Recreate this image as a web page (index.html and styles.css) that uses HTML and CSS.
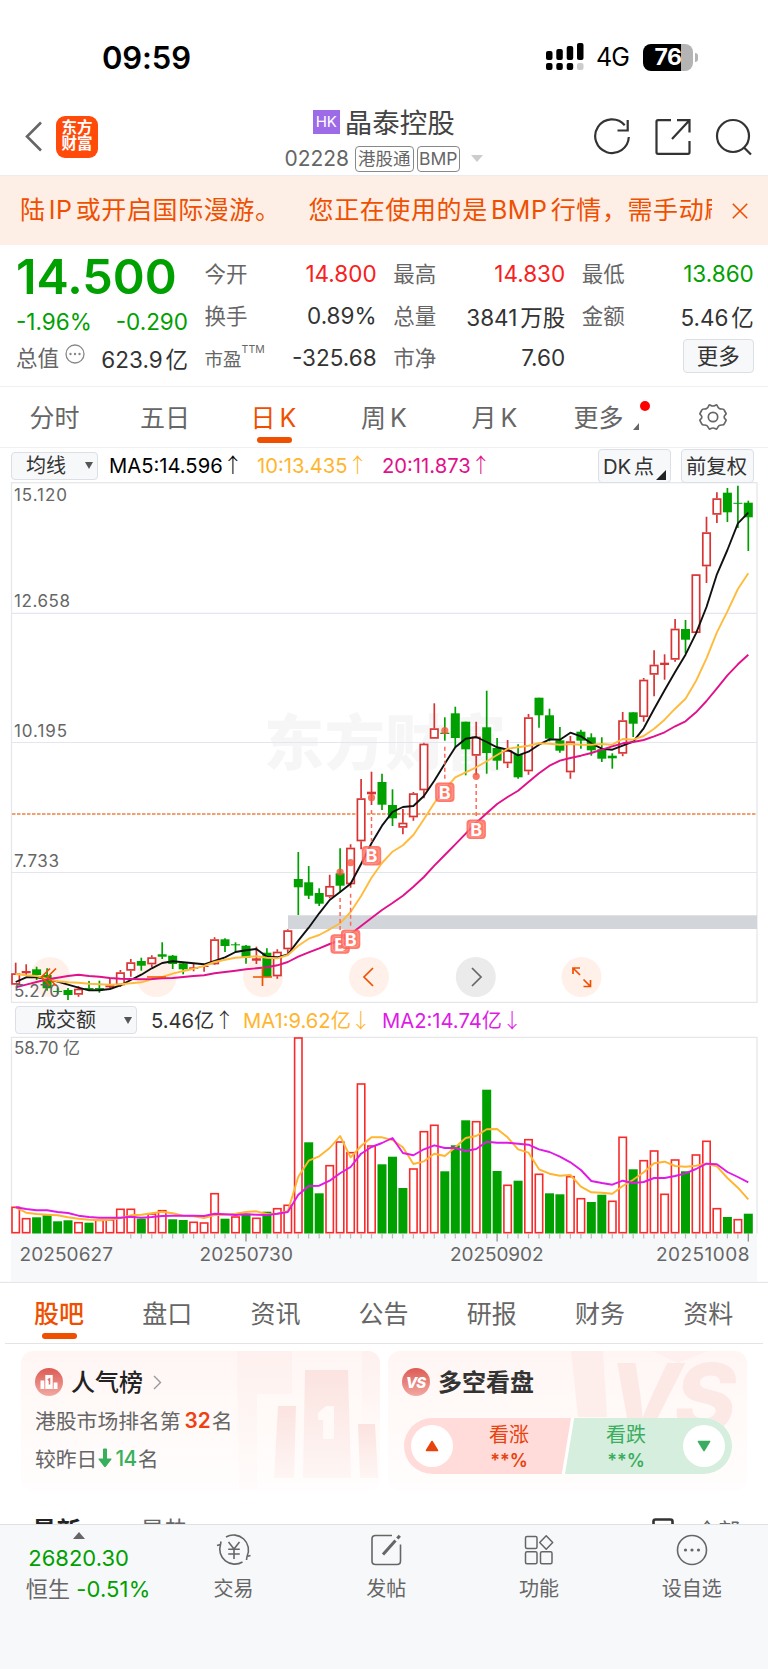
FILE: index.html
```html
<!DOCTYPE html>
<html lang="zh-CN">
<head>
  <meta charset="UTF-8">
  <meta name="viewport" content="width=device-width, initial-scale=1.0">
  <title>晶泰控股 02228</title>
  <link rel="stylesheet" href="styles.css">
</head>
<body>
  <div class="status-bar">
    <span class="time">09:59</span>
    <svg class="signal" width="38" height="28" viewBox="0 0 38 28">
      <g fill="#000">
        <rect x="0" y="8" width="6.500" height="9" rx="2"/><rect x="10.300" y="6" width="6.500" height="11" rx="2"/>
        <rect x="20.700" y="3" width="6.500" height="14" rx="2"/><rect x="31" y="0" width="6.500" height="17" rx="2"/>
        <rect x="0" y="20" width="6.500" height="7" rx="2"/><rect x="10.300" y="20" width="6.500" height="7" rx="2"/>
        <rect x="20.700" y="20" width="6.500" height="7" rx="2"/>
      </g>
      <rect x="31" y="20" width="6.500" height="7" rx="2" fill="#ccc"/>
    </svg>
    <span class="network">4G</span>
    <div class="battery"><span>76</span></div>
    <i class="battery-nub"></i>
  </div>

  <header class="header">
    <svg class="back" width="18" height="31" viewBox="0 0 18 31"><path d="M16 1.500L2 15.500L16 29.500" fill="none" stroke="#666" stroke-width="2.600"/></svg>
    <div class="logo">东方<br>财富</div>
    <div class="title">
      <div class="name"><span class="hk">HK</span>晶泰控股</div>
      <div class="code"><span>02228</span><em>港股通</em><em class="bmp">BMP</em><i></i></div>
    </div>
    <svg class="tool" width="38" height="38" viewBox="0 0 38 38" fill="none" stroke="#333" stroke-width="2.200">
      <path d="M31.700 7.200A16.800 16.800 0 1 0 35.800 19"/><path d="M34.700 2V12.500H24.500"/>
    </svg>
    <svg class="tool" width="38" height="38" viewBox="0 0 38 38" fill="none" stroke="#333" stroke-width="2.200">
      <path d="M17 2.200H4Q2.500 2.200 2.500 3.700V34.300Q2.500 35.800 4 35.800H34Q35.500 35.800 35.500 34.300V23"/><path d="M23 2.200H35.500V14.500M35 2.700L18 21"/>
    </svg>
    <svg class="tool" width="38" height="38" viewBox="0 0 38 38" fill="none" stroke="#333" stroke-width="2.200">
      <circle cx="18" cy="18" r="16"/><path d="M29 29.500L36 36.500"/>
    </svg>
  </header>

  <div class="notice">
    <div class="notice-text"><span>陆 IP 或开启国际漫游。</span><span>您正在使用的是 BMP 行情，需手动刷</span></div>
    <svg width="16" height="16" viewBox="0 0 14 14"><path d="M0.700 0.700L13.300 13.300M13.300 0.700L0.700 13.300" stroke="#ef5000" stroke-width="1.400"/></svg>
  </div>

  <section class="quote">
    <div class="main-price">14.500</div>
    <div class="cell change"><span>-1.96%</span><span>-0.290</span></div>
    <div class="cell cap"><label>总值</label>
      <svg width="20" height="20" viewBox="0 0 20 20"><circle cx="10" cy="10" r="9" fill="none" stroke="#888" stroke-width="1.300"/><g fill="#888"><circle cx="5.500" cy="10" r="1.200"/><circle cx="10" cy="10" r="1.200"/><circle cx="14.500" cy="10" r="1.200"/></g></svg>
      <b>623.9 亿</b></div>
    <div class="cell r1 c2"><label>今开</label><b class="red">14.800</b></div>
    <div class="cell r1 c3"><label>最高</label><b class="red">14.830</b></div>
    <div class="cell r1 c4"><label>最低</label><b class="green">13.860</b></div>
    <div class="cell r2 c2"><label>换手</label><b>0.89%</b></div>
    <div class="cell r2 c3"><label>总量</label><b>3841 万股</b></div>
    <div class="cell r2 c4"><label>金额</label><b>5.46 亿</b></div>
    <div class="cell r3 c2"><label class="small">市盈<sup>TTM</sup></label><b>-325.68</b></div>
    <div class="cell r3 c3"><label>市净</label><b>7.60</b></div>
    <div class="cell r3 c4"><button class="more">更多</button></div>
  </section>

  <nav class="periods">
    <span>分时</span><span>五日</span><span class="active">日 K</span><span>周 K</span><span class="month">月 K</span>
    <span class="has-menu">更多<i class="dot"></i><i class="corner"></i></span>
    <svg width="28" height="28" viewBox="0 0 28 28" fill="none" stroke="#666" stroke-width="1.700">
      <path d="M9.500 3.200Q10.200 1.300 11.500 2.200Q14 3.800 16.500 2.200Q17.800 1.300 18.500 3.200Q19.700 6.200 22.900 6Q24.800 5.900 25.400 7.400Q26 8.900 26.800 9.900Q27.500 11 26.300 11.800Q24 14 26.300 16.200Q27.500 17 26.800 18.100Q26 19.300 25.400 20.600Q24.800 22.100 22.900 22Q19.700 21.800 18.500 24.800Q17.800 26.700 16.500 25.800Q14 24.200 11.500 25.800Q10.200 26.700 9.500 24.800Q8.300 21.800 5.100 22Q3.200 22.100 2.600 20.600Q2 19.300 1.200 18.100Q0.500 17 1.700 16.200Q4 14 1.700 11.800Q0.500 11 1.200 9.900Q2 8.900 2.600 7.400Q3.200 5.900 5.100 6Q8.300 6.200 9.500 3.200Z"/>
      <circle cx="14" cy="14" r="4.700"/>
    </svg>
  </nav>

  <div class="indicator-bar">
    <button class="select avg">均线<i></i></button>
    <span class="ma5">MA5:14.596<u>↑</u></span>
    <span class="ma10">10:13.435<u>↑</u></span>
    <span class="ma20">20:11.873<u>↑</u></span>
    <button class="tag dk">DK 点<i></i></button>
    <button class="tag">前复权</button>
  </div>

  <svg class="chart" id="priceChart" width="768" height="522" viewBox="0 482 768 522"></svg>

  <div class="volume-bar">
    <button class="select vol">成交额<i></i></button>
    <span class="now">5.46亿<u>↑</u></span>
    <span class="ma10">MA1:9.62亿<u>↓</u></span>
    <span class="vma2">MA2:14.74亿<u>↓</u></span>
  </div>

  <svg class="chart" id="volumeChart" width="768" height="247" viewBox="0 1036 768 247"></svg>

  <nav class="tabs">
    <span class="active">股吧</span><span>盘口</span><span>资讯</span><span>公告</span><span>研报</span><span>财务</span><span>资料</span>
  </nav>

  <section class="cards">
    <div class="card rank">
      <svg class="card-bg" width="359" height="140" viewBox="0 0 359 140">
        <defs><linearGradient id="fade" x1="0" y1="0" x2="0" y2="1"><stop offset="0" stop-color="#fbe3e0"/><stop offset="1" stop-color="#fef6f4"/></linearGradient></defs>
        <g fill="url(#fade)">
          <path d="M216 0H271V43H236V138H218Z" opacity=".3"/><path d="M341 0H359V73H341Z" opacity=".3"/>
          <path d="M257 55H275L273 127H253Z"/><path d="M284 19H327L330 127H282Z"/><path d="M337 73H354L357 127H339Z"/>
        </g>
        <path d="M297 62L305 55H313V88H302V69H297Z" fill="#fffaf8"/>
      </svg>
      <h3>
        <svg width="28" height="28" viewBox="0 0 28 28"><defs><linearGradient id="badge" x1="0" y1="0" x2="0" y2="1"><stop offset="0" stop-color="#dc5a53"/><stop offset="1" stop-color="#f3a8a2"/></linearGradient></defs>
          <circle cx="14" cy="14" r="14" fill="url(#badge)"/><path d="M5.500 21V12.500H9.300V21ZM10.300 21V7H17.700V21ZM18.700 21V14.500H22.500V21Z" fill="#fff"/><path d="M12.800 12L14.500 11V16.500" fill="none" stroke="#e2736c" stroke-width="1.600"/></svg>
        <span>人气榜</span>
        <svg class="arrow" width="9" height="15" viewBox="0 0 9 15"><path d="M1 1L7.500 7.500L1 14" fill="none" stroke="#999" stroke-width="1.400"/></svg>
      </h3>
      <p>港股市场排名第<strong>32</strong>名</p>
      <p>较昨日<svg width="14" height="20" viewBox="0 0 14 20"><path d="M5 1.500Q5 0.500 6 0.500H8Q9 0.500 9 1.500V10.500H13Q14 10.500 13.400 11.500L7.800 18.800Q7 19.700 6.200 18.800L0.600 11.500Q0 10.500 1 10.500H5Z" fill="#36b05c"/></svg><span class="down">14</span>名</p>
    </div>
    <div class="card vote">
      <svg class="card-bg" width="359" height="140" viewBox="0 0 359 140">
        <path d="M183 0H215L219 66H190Z" fill="#fdeeeb"/>
        <path d="M264 0H320L290 12Z" fill="#fdf0ee"/>
        <text x="220" y="80" class="vs-mark">VS</text>
      </svg>
      <h3>
        <svg width="28" height="28" viewBox="0 0 28 28"><circle cx="14" cy="14" r="14" fill="url(#badge)"/><text x="13.500" y="19.500" class="vs-icon">VS</text></svg>
        <span>多空看盘</span>
      </h3>
      <div class="pill">
        <div class="side up">
          <i><svg width="14" height="12" viewBox="0 0 14 12"><path d="M7 1.500L12.500 10.500H1.500Z" fill="#e8420e" stroke="#e8420e" stroke-linejoin="round" stroke-width="1.600"/></svg></i>
          <div>看涨<br><b>**%</b></div>
        </div>
        <div class="side fall">
          <div>看跌<br><b>**%</b></div>
          <i><svg width="14" height="12" viewBox="0 0 14 12"><path d="M7 10.500L12.500 1.500H1.500Z" fill="#3bad60" stroke="#3bad60" stroke-linejoin="round" stroke-width="1.600"/></svg></i>
        </div>
      </div>
    </div>
  </section>

  <div class="feed-head">
    <b>最新</b><span>最热</span>
    <svg width="22" height="22" viewBox="0 0 22 22"><rect x="1.500" y="1.500" width="19" height="19" rx="2" fill="none" stroke="#333" stroke-width="2.600"/></svg>
    <em>全部</em>
  </div>

  <footer class="bottom-bar">
    <div class="index">
      <i></i>
      <div class="point">26820.30</div>
      <div class="rate">恒生 <span>-0.51%</span></div>
    </div>
    <div class="item">
      <svg width="36" height="34" viewBox="0 0 36 34" fill="none" stroke="#666" stroke-width="1.600">
        <path d="M10 4A15 15 0 0 1 31 23.500M31 23.500L30.500 27M31 23.500L34.500 22.500"/><path d="M26.500 29A15 15 0 0 1 4.500 11.500M4.500 11.500L1 12.500M4.500 11.500L5 8.500"/>
        <path d="M12.500 9L18 16L23.500 9M18 16V26M12.200 16.300H23.800M12.200 21H23.800"/>
      </svg>交易</div>
    <div class="item">
      <svg width="36" height="34" viewBox="0 0 36 34" fill="none" stroke="#666" stroke-width="1.600">
        <path d="M24 2.500H7.500Q4 2.500 4 6V28Q4 31.500 7.500 31.500H29Q32.500 31.500 32.500 28V11.500"/><path d="M15 21.500L27.500 7.500" stroke-width="3"/><path d="M29.300 5.500L31.800 2.700" stroke-width="3"/>
      </svg>发帖</div>
    <div class="item">
      <svg width="36" height="34" viewBox="0 0 36 34" fill="none" stroke="#666" stroke-width="1.500">
        <rect x="4.500" y="3.500" width="11.500" height="12" rx="1.500"/><rect x="4.500" y="18.800" width="11.500" height="12" rx="1.500"/><rect x="19.500" y="18.800" width="11.500" height="12" rx="1.500"/><path d="M25.200 2.800L31.700 9.500L25.200 16.200L18.700 9.500Z" stroke-linejoin="round"/>
      </svg>功能</div>
    <div class="item">
      <svg width="36" height="34" viewBox="0 0 36 34"><circle cx="18" cy="17" r="14.500" fill="none" stroke="#666" stroke-width="1.600"/><g fill="#666"><circle cx="11.500" cy="17" r="1.600"/><circle cx="18" cy="17" r="1.600"/><circle cx="24.500" cy="17" r="1.600"/></g></svg>设自选</div>
  </footer>

  <script src="chart.js"></script>
</body>
</html>
```

FILE: styles.css
```css
* {
  box-sizing: border-box;
}

body {
  margin: 0;
  width: 768px;
  height: 1669px;
  overflow: hidden;
  background: #fff;
  color: #333;
  font-family: Inter, "Noto Sans CJK SC", sans-serif;
}

i, em {
  font-style: normal;
}

svg {
  display: block;
  flex: none;
}

/* status bar */
.status-bar {
  display: flex;
  align-items: center;
  height: 114px;
  padding: 0 70px 0 102px;
  color: #000;
}

.time {
  font-size: 31px;
  font-weight: 600;
  letter-spacing: -0.1px;
  margin-right: auto;
}

.signal {
  margin-right: 12px;
}

.network {
  width: 47px;
  font-size: 25px;
  letter-spacing: -0.8px;
}

.battery {
  width: 50px;
  height: 27px;
  border-radius: 8px;
  background: linear-gradient(90deg, #000 76%, #b4b4b4 76%);
  color: #fff;
  font-size: 23px;
  font-weight: 700;
  line-height: 27px;
  text-align: center;
  letter-spacing: -0.5px;
}

.battery-nub {
  width: 3px;
  height: 9px;
  margin-left: 2px;
  border-radius: 0 3px 3px 0;
  background: #b4b4b4;
}

/* header */
.header {
  display: flex;
  align-items: center;
  height: 62px;
  padding: 0 15.500px 16px 25px;
  border-bottom: 1px solid #ececf0;
}

.logo {
  width: 42px;
  height: 42px;
  margin-left: 13px;
  padding-top: 4px;
  border-radius: 9px;
  background: #ff4a0a;
  color: #fff;
  font-size: 15.500px;
  font-weight: 700;
  line-height: 16.500px;
  text-align: center;
}

.title {
  flex: 1;
  padding-left: 77px;
  margin-top: 2px;
  text-align: center;
}

.name {
  display: flex;
  justify-content: center;
  align-items: center;
  height: 42px;
  font-size: 27.500px;
  color: #444;
}

.hk {
  width: 27px;
  height: 24px;
  margin: 2px 5px 0 0;
  background: #9d6ae8;
  color: #fff;
  font-size: 15px;
  line-height: 24px;
  text-align: center;
}

.code {
  display: flex;
  justify-content: center;
  align-items: center;
  height: 34px;
  font-size: 21px;
  color: #666;
}

.code span {
  margin-right: 6px;
}

.code em {
  height: 26px;
  padding: 0 2px;
  margin-right: 3px;
  border: 1px solid #888;
  border-radius: 4px;
  font-size: 17.500px;
  line-height: 23px;
}

.code .bmp {
  padding: 0 1.500px;
  line-height: 24px;
}

.code i {
  margin-left: 8px;
  border: 6.500px solid transparent;
  border-top: 7px solid #ccc;
  border-bottom: 0;
}

.tool + .tool {
  margin-left: 23px;
}

/* roaming notice */
.notice {
  display: flex;
  align-items: center;
  height: 69px;
  padding: 0 20px 0 20px;
  background: #fdeee6;
  color: #ef5000;
}

.notice-text {
  width: 692px;
  margin: -5px 20px 0 0;
  overflow: hidden;
  white-space: nowrap;
  font-size: 25px;
  letter-spacing: 0.600px;
  word-spacing: -4.500px;
}

.notice-text span + span {
  margin-left: 28px;
}

/* quote */
.quote {
  display: grid;
  grid-template-columns: repeat(4, 171px);
  grid-template-rows: 42px 42px 42px;
  column-gap: 17.600px;
  height: 142px;
  padding: 8px 0 0 17px;
  border-bottom: 1px solid #f0f0f0;
}

.main-price {
  grid-row: 1;
  grid-column: 1;
  height: 48px;
  margin-left: -1px;
  color: #00a000;
  font-size: 48.500px;
  font-weight: 600;
  line-height: 48px;
}

.cell {
  display: flex;
  align-items: center;
  justify-content: space-between;
  height: 42px;
  white-space: nowrap;
  font-size: 22.500px;
  word-spacing: -3.500px;
}

.cell label {
  margin: -4px 0 0 -1px;
  color: #666;
  font-size: 21.500px;
}

.cell b {
  margin-top: -1px;
  color: #333;
  font-weight: 400;
}

.cell b.red {
  color: #f82020;
}

.cell b.green,
.change {
  color: #00a000;
}

.change {
  grid-row: 2;
  grid-column: 1;
  padding-top: 10px;
  margin-left: -1px;
}

.cap {
  grid-row: 3;
  grid-column: 1;
}

.cap svg {
  margin: -9px auto 0 6px;
}

.r1 { grid-row: 1; }
.r2 { grid-row: 2; }
.r3 { grid-row: 3; }
.c2 { grid-column: 2; }
.c3 { grid-column: 3; }
.c4 { grid-column: 4; }

.cell .small {
  font-size: 18.500px;
  padding-top: 4px;
}

.small sup {
  font-size: 10.500px;
  vertical-align: 13px;
  line-height: 0;
}

button {
  font-family: inherit;
  color: #333;
  background: #f7f8fa;
  border: 1px solid #dcdfe6;
  border-radius: 4px;
  padding: 0;
}

.more {
  width: 71px;
  height: 34px;
  margin: -4px 0 0 auto;
  font-size: 21.500px;
  line-height: 30px;
}

/* period tabs */
.periods {
  display: flex;
  align-items: center;
  height: 61px;
  padding: 0 0 3px 29.500px;
  border-bottom: 1px solid #f0f0f0;
  font-size: 25px;
  word-spacing: -3px;
  color: #666;
}

.periods span {
  position: relative;
  width: 110.500px;
  white-space: nowrap;
}

.periods .month {
  width: 102px;
}

.periods .has-menu {
  width: 125px;
}

.periods svg {
  margin-top: 2px;
}

.periods .active,
.tabs .active {
  color: #ef5000;
}

.periods .active::after,
.tabs .active::after {
  content: "";
  position: absolute;
  left: 6px;
  bottom: -9px;
  width: 35px;
  height: 6px;
  border-radius: 3px;
  background: #ef5000;
}

.dot {
  position: absolute;
  left: 66px;
  top: 3px;
  width: 10px;
  height: 10px;
  border-radius: 50%;
  background: #f00;
}

.corner {
  position: absolute;
  left: 59px;
  bottom: 4px;
  border-left: 6px solid transparent;
  border-bottom: 7px solid #666;
}

/* indicator rows */
.indicator-bar,
.volume-bar {
  display: flex;
  align-items: center;
  height: 34px;
  padding-left: 11px;
  font-size: 20.200px;
  white-space: nowrap;
}

.indicator-bar u,
.volume-bar u {
  font-family: "Noto Sans CJK SC", sans-serif;
  font-weight: 300;
  text-decoration: none;
}

.indicator-bar span,
.volume-bar span {
  margin-top: -1px;
}

.select {
  display: flex;
  align-items: center;
  justify-content: space-between;
  height: 28px;
  margin-right: 11px;
  font-size: 20px;
  line-height: 26px;
}

.avg {
  width: 87px;
  margin-top: 1px;
  padding: 0 4px 0 14px;
}

.vol {
  width: 122px;
  padding: 0 4px 0 20px;
}

.select i {
  border: 4px solid transparent;
  border-top: 7px solid #555;
  border-bottom: 0;
}

.ma5 {
  width: 148px;
  color: #000;
}

.ma10 {
  width: 125px;
  color: #ffb52e;
}

.ma20 {
  width: 216px;
  color: #e0118a;
}

.tag {
  position: relative;
  width: 73px;
  height: 34px;
  margin-top: 2px;
  padding-right: 2px;
  font-size: 20.300px;
  line-height: 31px;
}

.tag + .tag {
  margin-left: 10px;
}

.dk {
  padding-right: 12px;
  word-spacing: -3px;
}

.dk i {
  position: absolute;
  right: 4px;
  bottom: 2px;
  border-left: 10px solid transparent;
  border-bottom: 10px solid #222;
}

.volume-bar {
  height: 32px;
  padding-left: 15px;
}

.volume-bar .select {
  margin-right: 14px;
}

.now {
  width: 92px;
}

.volume-bar .ma10 {
  width: 139px;
}

.vma2 {
  color: #e01ae6;
}

/* charts */
.axis {
  fill: #666;
  font-size: 17px;
}

.date {
  fill: #666;
  font-size: 19px;
}

.watermark {
  fill: #f6f6f7;
  font-size: 60px;
  font-weight: 900;
}

.b-text {
  fill: #fff;
  font-size: 18px;
  font-weight: 700;
  text-anchor: middle;
}

/* content tabs */
.tabs {
  display: flex;
  align-items: center;
  height: 61px;
  margin: 0 5px;
  padding: 0 0 3px 29px;
  border-bottom: 1px solid #e4e4e4;
  font-size: 25px;
  color: #666;
}

.tabs span {
  position: relative;
  flex: none;
  width: 108.200px;
  white-space: nowrap;
}

.tabs span:last-child {
  width: auto;
}

.tabs .active {
  font-weight: 500;
}

.tabs .active::after {
  left: 8px;
  bottom: -9px;
}

/* cards */
.cards {
  display: flex;
  gap: 8px;
  height: 169px;
  padding: 7px 0 0 21px;
}

.card {
  position: relative;
  width: 359px;
  height: 140px;
  border-radius: 12px;
  overflow: hidden;
  background: linear-gradient(#fff6f4, #fffaf8 50%, #fffdfd);
}

.card-bg {
  position: absolute;
  left: 0;
  top: 0;
}

.card h3 {
  position: relative;
  display: flex;
  align-items: center;
  gap: 8px;
  height: 28px;
  margin: 17px 0 0 14px;
  font-size: 24px;
  font-weight: 500;
  color: #222;
}

.card h3 span {
  margin-top: -3px;
}

.card .arrow {
  margin-left: 2px;
}

.card p {
  position: relative;
  display: flex;
  align-items: center;
  height: 38px;
  margin: 0 0 0 14px;
  font-size: 20.800px;
  color: #666;
}

.card h3 + p {
  margin-top: 5px;
}

.card strong {
  margin: 0 1px 0 4px;
  font-weight: 600;
  color: #ee4012;
}

.card p svg {
  margin: 0 3px 0 1px;
}

.down {
  color: #36b05c;
  font-weight: 500;
  letter-spacing: -0.500px;
  margin-right: 1px;
}

.vs-mark {
  fill: #fce9e6;
  font-size: 94px;
  font-weight: 800;
  font-style: italic;
  letter-spacing: -6px;
}

.vs-icon {
  fill: #fff;
  font-size: 15px;
  font-weight: 800;
  font-style: italic;
  text-anchor: middle;
  letter-spacing: -1px;
}

.vote h3 {
  color: #333;
  font-weight: 700;
}

.pill {
  position: relative;
  display: flex;
  justify-content: space-between;
  width: 328px;
  height: 56px;
  margin: 22px 0 0 16px;
  border-radius: 28px;
  overflow: hidden;
  background: #fff;
}

.side {
  display: flex;
  align-items: center;
  width: 167px;
  font-size: 20px;
  line-height: 25px;
  text-align: center;
}

.side div {
  margin-top: 3px;
}

.side i {
  display: flex;
  align-items: center;
  justify-content: center;
  width: 42px;
  height: 42px;
  border-radius: 50%;
  background: #fff;
}

.side b {
  font-size: 18px;
  font-weight: 600;
}

.side.up {
  gap: 36px;
  padding-left: 7px;
  background: #ffdcda;
  color: #e8420e;
  clip-path: polygon(0 0, 100% 0, 94.500% 100%, 0 100%);
}

.side.fall {
  justify-content: flex-end;
  gap: 37px;
  padding-right: 7px;
  margin-left: -6px;
  background: #d6eedd;
  color: #3bad60;
  clip-path: polygon(5.500% 0, 100% 0, 100% 100%, 0 100%);
}

/* feed header, cut by the bottom bar */
.feed-head {
  display: flex;
  height: 11px;
  padding: 2px 28px 0 32px;
  overflow: hidden;
  font-size: 24.500px;
  line-height: 33px;
}

.feed-head b {
  width: 108px;
  color: #222;
}

.feed-head span {
  flex: 1;
  font-size: 24.500px;
  color: #666;
}

.feed-head svg {
  margin: 3px 22px 0 0;
}

.feed-head em {
  font-size: 22px;
  color: #666;
}

/* bottom bar */
.bottom-bar {
  position: relative;
  display: flex;
  height: 147px;
  border-top: 1px solid #dfe0e5;
  background: #f7f8fa;
  color: #666;
  font-size: 20px;
}

.index {
  width: 157.500px;
  font-size: 22px;
  text-align: center;
}

.index i {
  display: block;
  width: 12px;
  margin: 7px auto 0;
  border: 6px solid transparent;
  border-bottom: 7px solid #666;
  border-top: 0;
}

.point {
  margin-top: 5px;
  height: 28px;
  line-height: 28px;
}

.rate {
  height: 34px;
  padding-left: 19px;
  line-height: 34px;
  font-size: 22px;
  letter-spacing: 0.1px;
  white-space: nowrap;
}

.point,
.rate span {
  color: #00a000;
}

.item {
  display: flex;
  flex-direction: column;
  align-items: center;
  width: 153px;
  padding-top: 8px;
  line-height: 45px;
}
```

FILE: chart.js
```js
const LEFT = 15.7;
const STEP = 10.466;
const UP = '#d93434';
const DOWN = '#00a000';
const x = i => +(LEFT + i * STEP).toFixed(1);

// [direction, high, body top, body bottom, low]
const candles = [
  ['r',962.7,973.3,984.7,984.7],['r',964.3,971,973.3,976],['g',966.7,969.3,975,980],['g',968.3,975,988.3,990.7],
  ['g',987.7,991,992,994],['g',988,990,995,1000],['r',986,988.7,994.7,996.7],['g',981,988,989.3,990.5],
  ['g',980.7,988,989.3,992.7],['r',978.3,985.3,987.3,988],['r',970,972.3,985.3,987],['r',959,962.3,970.7,976.7],
  ['g',957.7,961,965.7,970.7],['r',955.3,957.3,964.3,967.3],['g',942.3,954.3,956.7,959],['g',955,955.7,964,969],
  ['g',962.7,963.3,969.3,974.3],['r',963.3,967.3,969,971.3],['r',964,966,967,971.7],['r',937.3,939.3,964.3,965],
  ['g',938.3,939.3,946,952],['g',942.3,944.3,945.3,952.3],['g',945,945.7,957.7,963.7],['r',946.7,958.3,960.7,964],
  ['g',948.3,952.7,976.7,976.7],['r',949.3,951.7,976.3,978.7],['r',929.3,930.3,949.3,953.3],['g',852,879,887.3,915],
  ['g',866,882.3,895.7,899],['g',888.3,893,903.7,906],['r',874.7,886,896.7,898.3],['g',848.3,873.3,885.7,892.7],
  ['r',844.3,847.7,884.3,887.7],['r',779,798.3,841.3,849.3],['r',771.7,791.7,794.3,805],['g',773.7,782,804.7,810],
  ['g',789.3,805,818.3,826],['r',809,822.7,827.7,834.3],['r',792,793.3,817.3,820.7],['r',742.7,743.7,790.3,798.3],
  ['r',703.3,728.3,738.7,738.7],['g',717.3,732.7,734,740.7],['g',706.7,713.3,738,747.3],['g',721.7,721.7,749.3,775.3],
  ['r',721.7,736.7,755.7,775],['g',690.7,727.3,753,773.7],['g',738,748,760.7,769.7],['r',740,750.3,763.3,768],
  ['g',744.3,754,777.3,778.7],['r',714,717.3,771.3,774.7],['g',697.7,697.7,715.3,727.7],['g',708.7,715.3,738.7,741.3],
  ['g',727,740.3,750.7,752.7],['r',736,741.3,772.3,778.7],['g',729.7,731.7,740.7,748.7],['g',733.3,737.3,750.3,755.7],
  ['g',737.3,749.3,758.7,762],['g',753.3,755.7,758.3,768.7],['r',712,720.3,753.7,756.3],['g',712.3,712.3,723.7,737],
  ['r',678,679.7,717,721.7],['r',650.3,664.7,674.7,696.3],['r',654.3,662.7,665,679.7],['r',619,628.7,659.7,661.7],
  ['g',620,629,639.7,653.3],['r',574.3,574.3,633,633],['r',516.7,532.3,566.3,583],['r',492.3,498.3,514.7,523],
  ['g',488,492.7,512.3,522],['g',485.7,502.8,503.8,528],['g',500.7,502.7,517.3,551]
];

const ma5 = [982,977.3,977.3,979,981.7,984.7,987.7,990.3,990.3,989,985.3,980,974.7,968.3,963,961.3,962.3,963.3,964.3,961,957.3,952,950.3,949,956.7,957.3,954.5,940.7,927.7,913.3,900,892,883.7,864,843.3,825.7,812,807,806,796,780.7,763.7,747.3,738.7,737,742,747.3,749.7,755.3,751.7,744.7,739.3,739.7,732.7,736.3,743.3,748.7,749.7,745.7,741.7,728.3,709,690.3,672,654.7,633.3,607,574.3,550,523.3,512.7];
const ma10 = [974,975.3,976,979,981.3,982.3,982.7,983.7,984.3,984.7,984.3,983.3,982.3,979.3,977,973.7,971,968.7,966,962,959.7,957.7,957,956.3,957.7,958.3,955,945.7,938.7,935,929.3,923.3,912,896,877.7,863,851.7,845.3,835,819.3,803,789.3,777.3,772.3,767.3,761.3,755,748.7,747.3,745.7,743.3,743.7,744.7,744,744.7,744.7,744,744.7,739,739.7,736,728.7,719.7,708.7,698.7,681,658.3,632.3,611.3,589,573.3];
const ma20 = [987.3,984.7,982,979.3,977.7,976,974.7,976,976.7,978,978.7,979,979.3,979,978.3,978,977,976,975.3,973.3,972,970.7,969.3,968.3,967.3,965.3,962,956.7,952.3,948.3,944,940.3,934,926,918,910,903,895.7,886.7,877,865.7,855,844.3,833.7,822.7,813.3,804,797,790.7,782,773.3,765.7,760.7,758,755.7,753,749.7,746.3,743.3,742,740,736.3,732.3,726.3,721.3,712.3,701,688.3,675.3,664.3,654.7];

// volume levels count down from the top of the pane, three to a pixel
const volumeY = v => +(1000 + v / 3).toFixed(1);
const volumes = 'r622 r656 g652 g646 g664 g661 r668 g668 r661 r660 r628 r628 g656 r642 r632 g658 g660 r667 r669 r581 g656 r651 g641 r655 g635 r626 r616 r114 g427 g580 r497 r426 r458 r252 r438 g493 g470 g564 r507 r395 r376 g514 g436 g361 r365 g269 g513 r556 g542 r419 r523 g580 g583 r530 r596 g606 g584 r604 r412 g508 r482 r453 r583 r480 g514 r465 r424 r626 g651 r659 g641'.split(' ');
const vma1 = [622,638,642,644,646,652,656,659,661,659,654,646,644,640,635,640,647,649,654,645,644,641,636,634,642,641,634,530,482,469,444,408,472,438,412,412,420,442,492,484,461,468,442,414,408,388,387,412,448,458,508,521,527,525,560,577,578,581,558,539,517,490,485,498,500,497,491,499,534,563,598];
const vma2 = [622,627,631,631,636,639,647,651,653,653,653,650,653,651,648,647,647,647,648,641,643,645,643,644,645,641,636,584,558,557,542,520,501,461,441,429,414,459,466,448,436,444,444,453,447,425,428,428,431,434,448,456,470,487,510,543,549,554,542,549,546,534,534,528,520,507,491,493,516,531,547];

// buy markers: [candle, dot, dashed line start, badge centre]
const buys = [[31,872,898,944],[32,862.7,893.7,939.3],[34,797.7,810,855.7],[41,730.7,746.7,792.3],[44,776.3,784,829.3]];

function line(values, color) {
  const points = values.map((y, i) => x(i) + ',' + y).join(' ');
  return `<polyline points="${points}" fill="none" stroke="${color}" stroke-width="1.9" stroke-linejoin="round"/>`;
}

function drawCandle([dir, high, top, bottom, low], i) {
  const cx = x(i);
  const color = dir === 'r' ? UP : DOWN;
  const h = bottom - top;
  if (dir === 'g' || h < 3.5) {
    return `<path d="M${cx} ${high}V${low}" stroke="${color}" stroke-width="1.7"/>
      <rect x="${cx - 4.5}" y="${top}" width="9" height="${h}" fill="${color}"/>`;
  }
  return `<path d="M${cx} ${high}V${top}M${cx} ${bottom}V${low}" stroke="${color}" stroke-width="1.7"/>
    <rect x="${cx - 3.7}" y="${top + .8}" width="7.400" height="${h - 1.6}" fill="#fff" stroke="${color}" stroke-width="1.7"/>`;
}

function drawPrice() {
  let s = '<text x="264" y="765" class="watermark" textLength="242">东方财富</text>';
  s += '<path d="M11 613.300H757M11 742.500H757M11 872.500H757" stroke="#e3e6ee" stroke-width="1.2"/>';
  s += '<rect x="11.500" y="482.700" width="745.500" height="519.700" fill="none" stroke="#e6e7ea" stroke-width="1.3"/>';
  s += '<rect x="288" y="915.300" width="469" height="13.700" fill="#d2d5da"/>';
  s += '<path d="M12 814H757" stroke="#f08040" stroke-width="1.6" stroke-dasharray="3.5 1.5"/>';
  [50, 156.5, 263, 369, 475.8, 581.5].forEach((cx, i) => {
    s += `<circle cx="${cx}" cy="977" r="20" fill="${i === 4 ? '#ebebeb' : '#fff1ea'}"/>`;
  });
  s += candles.map(drawCandle).join('');
  s += line(ma5, '#111') + line(ma10, '#ffbb3c') + line(ma20, '#e0118a');
  [['15.120', 501, 53], ['12.658', 607, 56], ['10.195', 737, 53], ['7.733', 867, 45], ['5.270', 997, 46]].forEach(([t, y, w]) => {
    s += `<text x="14" y="${y}" class="axis" textLength="${w}">${t}</text>`;
  });
  s += `<g fill="none" stroke="#ef5000" stroke-width="1.7">
    <path d="M50 968.500L41.500 977L50 985.500M56 968.500L47.500 977L56 985.500"/>
    <path d="M147 977H166M253 977H272M262.500 967V986"/>
    <path d="M373 968L364 977L373 986"/>
    <path d="M573 974V968H580M573.500 968.500L580 975M590.500 980V986.500H583.500M590 986L583.500 979.500"/></g>
    <path d="M472 968L481 977L472 986" fill="none" stroke="#666" stroke-width="1.7"/>`;
  buys.forEach(([i, dot, start, cy]) => {
    const cx = x(i);
    s += `<path d="M${cx} ${start}V${start + 33}" stroke="#fb6a5c" stroke-width="1.5" stroke-dasharray="4 3"/>
      <circle cx="${cx}" cy="${dot}" r="3.6" fill="#f4573f" opacity=".8"/>
      <rect x="${cx - 9.7}" y="${cy - 9.7}" width="19.400" height="19.400" rx="4" fill="#ff6252" opacity=".85"/>
      <rect x="${cx - 7.5}" y="${cy - 7.5}" width="15" height="15" rx="3" fill="none" stroke="#fff" stroke-width=".5" opacity=".5"/>
      <text x="${cx}" y="${cy + 6.5}" class="b-text">B</text>`;
  });
  document.getElementById('priceChart').innerHTML = s;
}

function drawVolume() {
  let s = '<rect x="11" y="1233.500" width="746" height="48" fill="#f7f8fa"/>';
  s += '<path d="M0 1282.300H768" stroke="#e6e7ea" stroke-width="1.3"/>';
  s += '<path d="M11.500 1233.500V1037.300H757V1233.500" fill="none" stroke="#e6e7ea" stroke-width="1.3"/>';
  volumes.forEach((v, i) => {
    const y = volumeY(+v.slice(1));
    const cx = x(i);
    if (v[0] === 'g') {
      s += `<rect x="${cx - 4.5}" y="${y}" width="9" height="${1233.5 - y}" fill="${DOWN}"/>`;
    } else {
      s += `<rect x="${cx - 3.7}" y="${y}" width="7.400" height="${1232.7 - y}" fill="#fff" stroke="#f92a2a" stroke-width="1.6"/>`;
    }
    if (i > 10) {
      const major = i === 22 || i === 46 || i === 70;
      s += `<path d="M${cx} 1233.500V${major ? 1241.5 : 1238.5}" stroke="${major ? '#888' : '#bbb'}" stroke-width="1.2"/>`;
    }
  });
  s += line(vma1.map(volumeY), '#ffb52e') + line(vma2.map(volumeY), '#e01ae6');
  s += '<text x="14" y="1054" class="axis" textLength="66">58.70 亿</text>';
  [['20250627', 19.5], ['20250730', 199.5], ['20250902', 450], ['20251008', 656]].forEach(([t, tx]) => {
    s += `<text x="${tx}" y="1261" class="date" textLength="93.500">${t}</text>`;
  });
  document.getElementById('volumeChart').innerHTML = s;
}

drawPrice();
drawVolume();
```
